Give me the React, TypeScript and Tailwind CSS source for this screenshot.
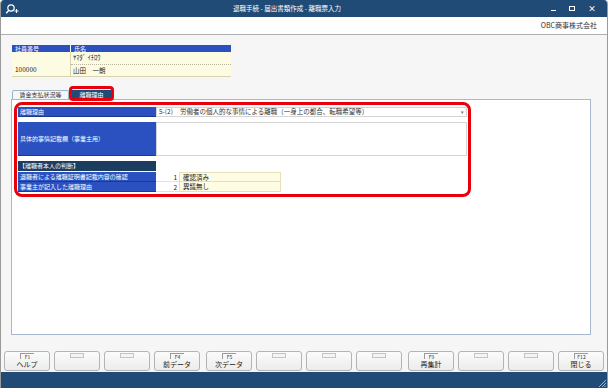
import React from "react";

function KeyButton({ k, label }: { k?: string; label?: string }) {
  return (
    <div className="flex-1 min-w-0 h-[20px] rounded-[3px] border border-[#b4b4b4] bg-gradient-to-b from-[#fbfbfb] to-[#ececec] text-center">
      {k ? (
        <div className="mx-auto mt-[1px] h-[6px] w-[14px] border-l border-t border-[#9a9a9a] text-[5px] leading-[6px] text-[#333]">
          {k}
        </div>
      ) : (
        <div className="mx-auto mt-[1px] h-[5px] w-[14px] border border-[#c4c4c4] bg-[#f4f4f4]" />
      )}
      {label && <div className="mt-[1px] text-[7px] leading-[9px] text-[#222] whitespace-nowrap">{label}</div>}
    </div>
  );
}

export default function App() {
  const groups: { k?: string; label?: string }[][] = [
    [{ k: "F1", label: "ヘルプ" }, {}, {}, { k: "F4", label: "前データ" }],
    [{ k: "F5", label: "次データ" }, {}, {}, {}],
    [{ k: "F9", label: "再集計" }, {}, {}, { k: "F12", label: "閉じる" }],
  ];
  return (
    <div className="w-[608px] h-[388px] overflow-hidden flex flex-col bg-[#f6f6f6] border-x border-[#9a9a9a] rounded-t-[4px] font-['Noto_Sans_CJK_JP','Noto_Sans',sans-serif] text-[#222]">
      {/* title bar */}
      <div className="h-[17px] shrink-0 bg-[#1f4b76] relative flex items-center text-white">
        <svg className="ml-[4px]" width="14" height="12" viewBox="0 0 14 12">
          <circle cx="6" cy="5" r="3.2" fill="none" stroke="white" strokeWidth="1.2" />
          <line x1="3.8" y1="7.3" x2="1.2" y2="10.2" stroke="white" strokeWidth="1.4" />
          <line x1="9.5" y1="8" x2="13.5" y2="8" stroke="white" strokeWidth="1" />
          <line x1="11.5" y1="6" x2="11.5" y2="10" stroke="white" strokeWidth="1" />
        </svg>
        <div className="flex-1 text-center text-[6.5px] leading-none pl-[4px]">退職手続 - 届出書類作成 - 離職票入力</div>
        <div className="flex items-center gap-[13px] mr-[11px] text-[8px] leading-none">
          <span className="w-[5px] h-[1px] bg-white mt-[3px]" />
          <span className="w-[6px] h-[5px] border border-white" />
          <span className="text-[8px] leading-none font-bold">×</span>
        </div>
      </div>
      {/* sub header */}
      <div className="h-[17px] shrink-0 bg-white flex items-center justify-end pr-[10px] text-[7px] text-[#333]">OBC商事株式会社</div>
      <div className="h-[1px] shrink-0 bg-[#b0b0b0]" />

      {/* main */}
      <div className="shrink-0 px-[10px] pt-[10px]">
        {/* employee table */}
        <div className="ml-[1px] w-[219px] flex flex-col">
          <div className="h-[7px] flex bg-[#2b50bf] text-white text-[6px] leading-[7px]">
            <div className="w-[59px] pl-[3px] border-r border-white">社員番号</div>
            <div className="flex-1 pl-[3px]">氏名</div>
          </div>
          <div className="h-[25px] flex bg-[#fdfbe1] border-b border-[#d8d4b0] text-[6.5px]">
            <div className="w-[59px] border-r border-[#d8d4b0] flex items-end pl-[3px] pb-[1px]">100000</div>
            <div className="flex-1 flex flex-col">
              <div className="h-[15px] flex items-center pl-[2px] border-b border-dotted border-[#b8b4a0]">ﾔﾏﾀﾞ ｲﾁﾛｳ</div>
              <div className="flex-1 flex items-center pl-[2px] pt-[1px]">山田　一朗</div>
            </div>
          </div>
        </div>

        {/* tabs */}
        <div className="mt-[12px] h-[10px] flex items-end">
          <div className="ml-[1px] w-[57px] h-[9px] rounded-t-[2px] border border-b-0 border-[#9fb2c6] bg-[#f4f7fa] text-[6px] leading-[8px] text-[#333] text-center">賃金支払状況等</div>
          <div className="ml-[3px] relative w-[39px] h-[9px] bg-[#1f4b76] text-white text-[6px] leading-[9px] text-center">
            離職理由
            <div className="absolute left-[-3px] top-[-4px] w-[45px] h-[15px] border-[3px] border-[#e8000b] rounded-[4px]" />
          </div>
        </div>

        {/* panel */}
        <div className="w-[580px] h-[236px] bg-white border border-[#a8b8cc]">
          <div className="ml-[2px] mt-[2px] w-[457px] h-[95px] border-[3px] border-[#e8000b] rounded-[8px] pt-[2px] pl-[1px] pr-[1px] text-[6px]">
            {/* row 1 */}
            <div className="h-[10px] flex">
              <div className="w-[138px] bg-[#2b50bf] text-white leading-[10px] pl-[2px] border-b border-[#1d3a8f]">離職理由</div>
              <div className="flex-1 border border-[#d4d4d4] flex items-center text-[6.5px] text-[#333]">
                <span className="ml-[2px] w-[21px]">5-(2)</span>
                <span className="flex-1">労働者の個人的な事情による離職（一身上の都合、転職希望等）</span>
                <span className="mr-[2px] text-[5px] text-[#666]">▾</span>
              </div>
            </div>
            {/* row 2 */}
            <div className="mt-[5px] h-[34px] flex">
              <div className="w-[138px] bg-[#2b50bf] text-white pl-[2px] flex items-center border-b border-[#1d3a8f]">具体的事情記載欄（事業主用）</div>
              <div className="flex-1 border border-[#d4d4d4] bg-white" />
            </div>
            {/* row 3 */}
            <div className="mt-[5px] h-[10px] flex">
              <div className="w-[138px] bg-[#1b3d60] text-white leading-[10px] pl-[1px]">【離職者本人の判断】</div>
            </div>
            {/* row 4 */}
            <div className="mt-[1px] h-[10px] flex">
              <div className="w-[138px] bg-[#2b50bf] text-white leading-[10px] pl-[2px] border-b border-[#1d3a8f]">退職者による離職証明書記載内容の確認</div>
              <div className="w-[23px] border-b border-[#e0e0e0] text-right pr-[2px] leading-[10px] text-[6.5px]">1</div>
              <div className="w-[102px] bg-[#fefce2] border border-[#e4e0bc] pl-[3px] leading-[8px] text-[6.5px]">確認済み</div>
            </div>
            {/* row 5 */}
            <div className="h-[10px] flex">
              <div className="w-[138px] bg-[#2b50bf] text-white leading-[10px] pl-[2px] border-b border-[#1d3a8f]">事業主が記入した離職理由</div>
              <div className="w-[23px] border-b border-[#e0e0e0] text-right pr-[2px] leading-[10px] text-[6.5px]">2</div>
              <div className="w-[102px] bg-[#fefce2] border border-t-0 border-[#e4e0bc] pl-[3px] leading-[9px] text-[6.5px]">異議無し</div>
            </div>
          </div>
        </div>
      </div>

      {/* footer */}
      <div className="mt-[16px] h-[20px] shrink-0 flex gap-[6px] px-[3px]">
        {groups.map((g, gi) => (
          <div key={gi} className="flex-1 flex gap-[4px]">
            {g.map((b, bi) => (
              <KeyButton key={bi} k={b.k} label={b.label} />
            ))}
          </div>
        ))}
      </div>
      <div className="mt-[1px] flex-1 bg-[#1f4b76] relative">
        <svg className="absolute right-[1px] bottom-[1px]" width="8" height="8" viewBox="0 0 8 8">
          <path d="M8 1 L1 8 M8 4 L4 8 M8 6.5 L6.5 8" stroke="#9fb6cc" strokeWidth="1" />
        </svg>
      </div>
    </div>
  );
}
